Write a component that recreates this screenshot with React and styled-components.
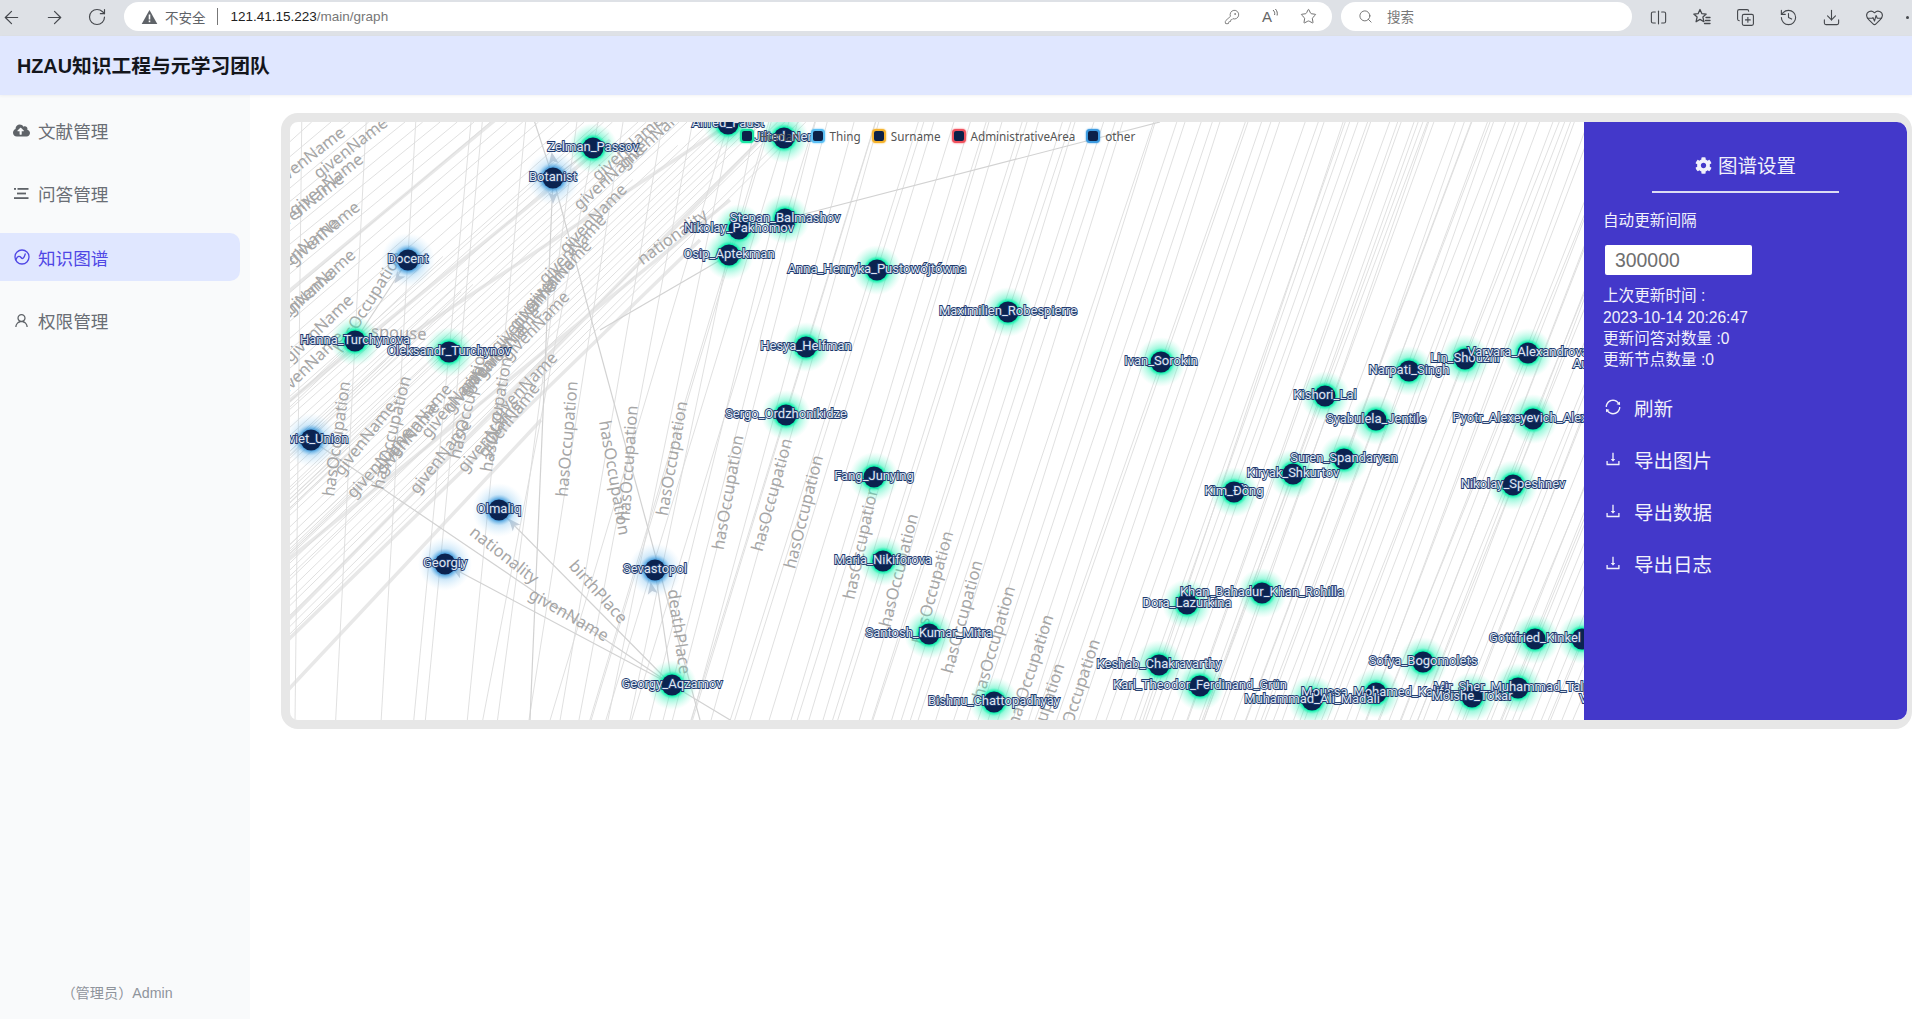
import React from "react";
import styled, { createGlobalStyle } from "styled-components";
import { FaCloudUploadAlt, FaCog } from "react-icons/fa";
import { AiOutlineSync, AiOutlineDownload, AiOutlineUser } from "react-icons/ai";
import {
  ArrowLeft,
  ArrowRight,
  RotateCw,
  KeyRound,
  Star,
  Search,
  SquareSplitHorizontal,
  CopyPlus,
  History,
  Download,
  HeartPulse,
} from "lucide-react";

const SANS = `"Liberation Sans", "Noto Sans CJK SC", sans-serif`;

const GlobalStyle = createGlobalStyle`
  html, body {
    margin: 0;
    padding: 0;
    width: 1912px;
    height: 1019px;
    overflow: hidden;
    background: #fff;
    font-family: ${SANS};
  }
  * { box-sizing: border-box; }
`;

const Page = styled.div`
  width: 1912px;
  height: 1019px;
  display: flex;
  flex-direction: column;
  overflow: hidden;
`;

const BrowserBar = styled.div`
  height: 36px;
  flex: none;
  background: #dee1e6;
  display: flex;
  align-items: flex-start;
  padding-top: 2px;
  color: #45484d;
`;

const NavIcons = styled.div`
  width: 124px;
  flex: none;
  height: 30px;
  display: flex;
  align-items: center;
  gap: 22px;
  padding-left: 1px;
`;

const Pill = styled.div`
  height: 29px;
  border-radius: 15px;
  background: #fff;
  display: flex;
  align-items: center;
  font-size: 13.5px;
  flex: none;
  width: ${(p) => p.$w}px;
  margin-right: ${(p) => p.$mr || 0}px;
  padding-left: ${(p) => p.$pl}px;
`;

const Warn = styled.span`
  color: #5f6368;
  margin-left: 7px;
`;

const UrlDivider = styled.span`
  width: 1px;
  height: 17px;
  background: #777;
  margin: 0 13px 0 11px;
`;

const UrlHost = styled.span`
  color: #222;
`;

const UrlPath = styled.span`
  color: #777;
`;

const UrlTools = styled.div`
  margin-left: auto;
  margin-right: 15px;
  display: flex;
  align-items: center;
  gap: 22px;
  color: #666;
`;

const ReadAloud = styled.span`
  display: flex;
  align-items: flex-start;
  font-size: 15px;
  line-height: 16px;
  color: #666;
`;

const SearchHint = styled.span`
  color: #777;
  margin-left: 14px;
  padding-bottom: 2px;
`;

const ToolIcons = styled.div`
  display: flex;
  align-items: center;
  gap: 24px;
  height: 30px;
  padding-left: 17px;
`;

const MoreDot = styled.span`
  width: 3px;
  height: 3px;
  border-radius: 50%;
  background: #45484d;
  margin-left: -2px;
`;

const Header = styled.header`
  height: 59px;
  flex: none;
  background: #e0e7ff;
  display: flex;
  align-items: center;
  padding: 0 0 2px 17px;
  font-size: 19.8px;
  font-weight: 700;
  color: #14161c;
  box-shadow: 0 1px 3px rgba(0, 0, 0, 0.05);
  position: relative;
`;

const Body = styled.div`
  flex: 1;
  display: flex;
  min-height: 0;
`;

const Sidebar = styled.aside`
  width: 250px;
  flex: none;
  background: #f9fafb;
  display: flex;
  flex-direction: column;
  padding: 11px 10px 17px 0;
`;

const NavItem = styled.div`
  height: 48px;
  margin-bottom: 15.5px;
  display: flex;
  align-items: center;
  padding-left: 13px;
  gap: 8px;
  font-size: 17.6px;
  border-radius: 0 10px 10px 0;
  color: ${(p) => (p.$active ? "#4f46e5" : "#6a6e75")};
  background: ${(p) => (p.$active ? "#e0e7ff" : "transparent")};
`;

const NavGlyph = styled.span`
  width: 17px;
  height: 17px;
  display: flex;
  align-items: center;
  justify-content: center;
  color: ${(p) => (p.$active ? "#4f46e5" : "#5f6368")};
`;

const UserName = styled.div`
  margin-top: auto;
  text-align: center;
  font-size: 14.2px;
  color: #8f949c;
  padding-right: 6px;
`;

const Main = styled.main`
  flex: 1;
  padding: 18px 0 0 31px;
  min-width: 0;
`;

const GraphFrame = styled.section`
  height: 616px;
  border-style: solid;
  border-color: #e7e7e7;
  border-width: 9px 5px 9px 9px;
  border-radius: 17px;
  display: flex;
  background: #fff;
`;

const GraphCanvas = styled.div`
  flex: 1;
  position: relative;
  overflow: hidden;
  border-radius: 8px 0 0 8px;
  svg {
    display: block;
  }
`;

const Legend = styled.div`
  position: absolute;
  left: 450px;
  top: 5px;
  display: flex;
  gap: 11px;
  font-family: "Noto Sans", sans-serif;
  font-size: 11.7px;
  color: #555;
`;

const LegendItem = styled.div`
  display: flex;
  align-items: center;
  gap: 5px;
  height: 17px;
`;

const LegendMark = styled.span`
  width: 14px;
  height: 14px;
  border-radius: 4px;
  background: #0c2149;
  border: 2px solid ${(p) => p.$color};
  box-shadow: 0 0 2px ${(p) => p.$color};
`;

const Panel = styled.aside`
  width: 323px;
  flex: none;
  background: #4338ca;
  color: #f1f1fb;
  border-radius: 0 10px 10px 0;
  padding: 30px 19px 0;
  font-size: 15.6px;
`;

const PanelTitle = styled.div`
  width: 187px;
  height: 41px;
  margin: 0 auto 16px;
  border-bottom: 2px solid #dcdcf3;
  display: flex;
  align-items: flex-start;
  justify-content: center;
  gap: 6px;
  font-size: 19.5px;
  line-height: 28px;
  svg {
    margin-top: 5px;
  }
`;

const FieldLabel = styled.div`
  line-height: 24px;
  margin-bottom: 12px;
`;

const IntervalInput = styled.input`
  display: block;
  width: 147px;
  height: 30px;
  margin-left: 2px;
  border: none;
  border-radius: 2px;
  background: #fff;
  padding: 0 0 0 10px;
  font-family: ${SANS};
  font-size: 19.4px;
  color: #6f6f6f;
  outline: none;
`;

const InfoLines = styled.div`
  margin-top: 10px;
  line-height: 21px;
`;

const InfoHead = styled.div`
  margin-bottom: 1px;
`;

const ActionList = styled.div`
  margin-top: 11px;
  display: flex;
  flex-direction: column;
`;

const Action = styled.div`
  height: 52px;
  display: flex;
  align-items: center;
  gap: 12px;
  padding-left: 1px;
  font-size: 19.5px;
  svg {
    width: 18px;
    height: 18px;
    flex: none;
  }
`;

const S = 1912 / 1568;

// person nodes + the concept nodes, in page coordinates
const nodes = [
  ["Alfred_Faust", 728, 124, "g"],
  ["Jilted_Nen", 784, 138, "g"],
  ["Zelman_Passov", 593, 148, "g"],
  ["Botanist", 553, 178, "b"],
  ["Stepan_Balmashov", 785, 219, "g"],
  ["Nikolay_Pakhomov", 739, 229, "g"],
  ["Osip_Aptekman", 729, 255, "g"],
  ["Docent", 408, 260, "b"],
  ["Anna_Henryka_Pustowójtówna", 877, 270, "g"],
  ["Maximilien_Robespierre", 1008, 312, "g"],
  ["Hanna_Turchynova", 355, 341, "g"],
  ["Oleksandr_Turchynov", 449, 352, "g"],
  ["Hesya_Helfman", 806, 347, "g"],
  ["Ivan_Sorokin", 1161, 362, "g"],
  ["Sergo_Ordzhonikidze", 786, 415, "g"],
  ["Soviet_Union", 311, 440, "b"],
  ["Fang_Junying", 874, 477, "g"],
  ["Olmaliq", 499, 510, "b"],
  ["Maria_Nikiforova", 883, 561, "g"],
  ["Georgiy", 445, 564, "b"],
  ["Sevastopol", 655, 570, "b"],
  ["Santosh_Kumar_Mitra", 929, 634, "g"],
  ["Georgy_Aqzamov", 672, 685, "g"],
  ["Kishori_Lal", 1325, 396, "g"],
  ["Narpati_Singh", 1409, 371, "g"],
  ["Lin_Shouzhi", 1465, 359, "g"],
  ["Varvara_Alexandrova", 1528, 353, "g"],
  ["Augustin_Robespierre", 1636, 365, "g"],
  ["Syabulela_Jentile", 1376, 420, "g"],
  ["Pyotr_Alexeyevich_Alexeyev", 1533, 419, "g"],
  ["Suren_Spandaryan", 1344, 459, "g"],
  ["Kiryak_Shkurtov", 1293, 474, "g"],
  ["Kim_Đồng", 1234, 492, "g"],
  ["Nikolay_Speshnev", 1513, 485, "g"],
  ["Khan_Bahadur_Khan_Rohilla", 1262, 593, "g"],
  ["Dora_Lazurkina", 1187, 604, "g"],
  ["Gottfried_Kinkel", 1535, 639, "g"],
  ["", 1582, 639, "g"],
  ["Keshab_Chakravarthy", 1159, 665, "g"],
  ["Sofya_Bogomolets", 1423, 662, "g"],
  ["Karl_Theodor_Ferdinand_Grün", 1200, 686, "g"],
  ["Mir_Sher_Muhammad_Talpur", 1518, 688, "g"],
  ["Moussa_Mohamed_Kalifa", 1376, 693, "g"],
  ["Moishe_Tokar", 1472, 697, "g"],
  ["Muhammad_Ali_Madali", 1312, 700, "g"],
  ["Bishnu_Chattopadhyay", 994, 702, "g"],
  ["Valentin_Volkov", 1625, 700, "g"],
];

// edge captions, in the coordinates of the scaled-down screenshot
const captions = [
  ["givenName", 288, 122, -38], ["givenName", 253, 130, -38], ["givenName", 268, 152, -38],
  ["givenName", 252, 168, -38], ["givenName", 266, 192, -40], ["givenName", 248, 205, -40],
  ["givenName", 263, 232, -42], ["givenName", 246, 248, -42], ["givenName", 262, 270, -44],
  ["givenName", 254, 300, -44], ["hasOccupation", 303, 248, -58], ["spouse", 327, 274, 3],
  ["givenName", 515, 122, -42], ["givenName", 500, 146, -42], ["givenName", 537, 112, -42],
  ["givenName", 487, 180, -46], ["givenName", 470, 205, -46], ["givenName", 458, 226, -46],
  ["givenName", 445, 242, -48], ["givenName", 430, 260, -48], ["givenName", 440, 268, -46],
  ["givenName", 418, 282, -48], ["givenName", 405, 295, -46], ["givenName", 392, 310, -48],
  ["givenName", 430, 318, -46], ["givenName", 372, 330, -50], ["givenName", 345, 345, -50],
  ["givenName", 300, 360, -52], ["givenName", 335, 360, -50], ["givenName", 312, 380, -48],
  ["givenName", 362, 375, -52], ["givenName", 402, 358, -50], ["givenName", 418, 345, -52],
  ["nationality", 552, 195, -36],
  ["hasOccupation", 277, 360, -82], ["hasOccupation", 322, 355, -76], ["hasOccupation", 385, 330, -76],
  ["hasOccupation", 408, 340, -80], ["hasOccupation", 466, 360, -85], ["hasOccupation", 503, 392, 80],
  ["hasOccupation", 516, 380, -86], ["hasOccupation", 552, 376, -80], ["hasOccupation", 598, 404, -80],
  ["hasOccupation", 634, 406, -75], ["hasOccupation", 660, 420, -76], ["hasOccupation", 707, 445, -78],
  ["hasOccupation", 738, 468, -76], ["hasOccupation", 766, 482, -75], ["hasOccupation", 790, 506, -75],
  ["hasOccupation", 816, 527, -74], ["hasOccupation", 846, 550, -72], ["hasOccupation", 884, 570, -72],
  ["hasOccupation", 855, 590, -72], ["nationality", 413, 456, 38], ["birthPlace", 490, 486, 48],
  ["givenName", 466, 505, 30], ["deathPlace", 556, 518, 82],
];

const stops = [
  [290, 0.02],
  [500, 0.12],
  [730, 0.3],
  [1000, 0.33],
  [1300, 0.37],
  [1600, 0.42],
];

const leanAt = (x) => {
  for (let i = 1; i < stops.length; i++) {
    if (x <= stops[i][0]) {
      const [x0, a] = stops[i - 1];
      const [x1, b] = stops[i];
      return a + ((b - a) * (x - x0)) / (x1 - x0);
    }
  }
  return 0.42;
};

let seed = 77;
const rnd = () => {
  seed = (seed * 16807) % 2147483647;
  return seed / 2147483647;
};

const buildEdges = () => {
  const out = [];
  // steep bundle crossing the whole graph, thin on the left and dense on the right
  for (let i = 0; i < 80; i++) {
    const t = i / 80;
    const x = 295 + 1280 * Math.pow(t, 0.62) + rnd() * 8;
    const lean = leanAt(x) + (rnd() - 0.5) * 0.03;
    out.push([x, 722, x + lean * 600, 122]);
  }
  // a line through every person node
  nodes.forEach(([, x, y, kind]) => {
    if (kind !== "g") return;
    const lean = leanAt(x);
    out.push([x - lean * (722 - y), 722, x + lean * (y - 122), 122]);
  });
  // diagonal bundle on the left
  for (let y0 = 140; y0 < 400; y0 += 15) {
    const k = 0.76 + (0.25 * (y0 - 140)) / 540;
    const end = Math.min(250 + rnd() * 420, (y0 - 122) / k);
    out.push([288, y0 + rnd() * 5, 288 + end, y0 - end * k]);
  }
  for (let y0 = 400; y0 < 640; y0 += 9) {
    const k = 0.76 + (0.25 * (y0 - 140)) / 540;
    const end = Math.min(300 + rnd() * 400, (y0 - 122) / k);
    out.push([288, y0 + rnd() * 4, 288 + end, y0 - end * k]);
  }
  for (let i = 0; i < 20; i++) {
    const y0 = 400 + rnd() * 190;
    const len = 60 + rnd() * 130;
    out.push([288, y0, 288 + len, y0 - len * 0.95]);
  }
  return out;
};

const thinEdges = buildEdges();

const heavyEdges = [
  [288, 292, 500, 116],
  [288, 402, 610, 140],
  [288, 560, 730, 200],
  [288, 640, 700, 240],
  [288, 690, 541, 420],
  [395, 345, 720, 130],
  [288, 620, 770, 130],
];

const namedEdges = [
  [672, 685, 311, 440],
  [672, 685, 445, 564],
  [672, 685, 499, 510],
  [672, 685, 655, 570],
  [672, 685, 780, 750],
  [355, 341, 408, 260],
  [553, 178, 593, 148],
  [553, 178, 700, 720],
  [553, 178, 530, 720],
  [785, 219, 1160, 122],
  [729, 255, 600, 330],
  [553, 178, 534, 120],
];

const arrows = [
  [553, 196, 180],
  [553, 160, -10],
  [399, 277, 215],
  [652, 590, 350],
  [514, 525, 320],
  [459, 572, 300],
];

const GLOW = { g: "url(#glowGreen)", b: "url(#glowBlue)" };

const GraphDrawing = () => (
  <svg width="1294" height="598" viewBox="290 122 1294 598" xmlns="http://www.w3.org/2000/svg">
    <defs>
      <radialGradient id="glowGreen">
        <stop offset="0.42" stopColor="#00f2a8" stopOpacity="1" />
        <stop offset="0.56" stopColor="#1ef0b0" stopOpacity="0.45" />
        <stop offset="1" stopColor="#7ff5d2" stopOpacity="0" />
      </radialGradient>
      <radialGradient id="glowBlue">
        <stop offset="0.4" stopColor="#2a8fd8" stopOpacity="0.8" />
        <stop offset="0.58" stopColor="#6ab8ec" stopOpacity="0.32" />
        <stop offset="1" stopColor="#a9daf8" stopOpacity="0" />
      </radialGradient>
    </defs>
    {heavyEdges.map(([x1, y1, x2, y2], i) => (
      <line key={i} x1={x1} y1={y1} x2={x2} y2={y2} stroke="#e8e8e8" strokeWidth="3.5" />
    ))}
    {thinEdges.map(([x1, y1, x2, y2], i) => (
      <line key={i} x1={x1} y1={y1} x2={x2} y2={y2} stroke="#dcdcdc" strokeWidth="0.9" />
    ))}
    {namedEdges.map(([x1, y1, x2, y2], i) => (
      <line key={i} x1={x1} y1={y1} x2={x2} y2={y2} stroke="#d2d2d2" strokeWidth="1.2" />
    ))}
    {arrows.map(([x, y, r], i) => (
      <path key={i} d="M0 -8 L5 4 L0 1 L-5 4 Z" fill="#c9ced6" transform={`translate(${x} ${y}) rotate(${r})`} />
    ))}
    {captions.map(([text, x, y, r], i) => (
      <text
        key={i}
        transform={`translate(${x * S} ${y * S}) rotate(${r})`}
        textAnchor="middle"
        dominantBaseline="middle"
        fontFamily='"Noto Sans", sans-serif'
        fontSize="16.5"
        fill="#a6a6a6"
      >
        {text}
      </text>
    ))}
    {nodes.map(([name, x, y, kind]) => (
      <circle key={`${name}${x}`} cx={x} cy={y} r={kind === "g" ? 25 : 27} fill={GLOW[kind]} />
    ))}
    {nodes.map(([name, x, y]) => (
      <circle key={`${name}${x}`} cx={x} cy={y} r="10.5" fill="#0b2350" />
    ))}
    {nodes.map(([name, x, y]) => (
      <text
        key={`${name}${x}`}
        x={x}
        y={y}
        textAnchor="middle"
        dominantBaseline="middle"
        fontFamily="Roboto, sans-serif"
        fontSize="13"
        fill="#dfe6f2"
        stroke="#1f3a6e"
        strokeWidth="1.8"
        paintOrder="stroke"
      >
        {name}
      </text>
    ))}
  </svg>
);

const KnowledgeIcon = () => (
  <svg width="16" height="16" viewBox="0 0 16 16" fill="none" stroke="currentColor" strokeWidth="1.3">
    <circle cx="8" cy="8" r="7" />
    <path d="M2 10.5c1.6-3.8 3.6-3.8 5-2s3 1.4 4.2-3.5" strokeLinecap="round" />
  </svg>
);

const ListIcon = () => (
  <svg width="15" height="13" viewBox="0 0 15 13" fill="currentColor">
    <rect x="0" y="1" width="2" height="1.8" />
    <rect x="3.5" y="1" width="11" height="1.8" />
    <rect x="3" y="5.6" width="9" height="1.8" />
    <rect x="0" y="10.2" width="14.5" height="1.8" />
  </svg>
);

const FavouritesIcon = () => (
  <svg width="20" height="20" viewBox="0 0 20 20" fill="none" stroke="currentColor" strokeWidth="1.3" strokeLinejoin="round">
    <path d="M8 2.5l1.9 4.2 4.3.4-3.3 3 1 4.6L8 12.4l-3.9 2.3 1-4.6-3.3-3 4.3-.4z" />
    <path d="M14 10.5h4M13.5 13.5h4.5M12.5 16.5h5.5" strokeLinecap="round" />
  </svg>
);

const WarnIcon = () => (
  <svg width="17" height="16" viewBox="0 0 17 16">
    <path d="M8.5 1L16.3 15H.7z" fill="#5f6368" />
    <rect x="7.7" y="5.5" width="1.6" height="5" fill="#fff" />
    <rect x="7.7" y="11.5" width="1.6" height="1.7" fill="#fff" />
  </svg>
);

const SoundWaves = () => (
  <svg width="6" height="10" viewBox="0 0 6 10" fill="none" stroke="currentColor" strokeWidth="1">
    <path d="M1 1c1.6 1.5 2 3 1.6 5M3.4 0c1.8 2 2.2 4 1.7 6.5" />
  </svg>
);

const menu = [
  ["文献管理", <FaCloudUploadAlt size={17} />],
  ["问答管理", <ListIcon />],
  ["知识图谱", <KnowledgeIcon />, true],
  ["权限管理", <AiOutlineUser size={17} />],
];

const legend = [
  ["Human", "#18e6a2"],
  ["Thing", "#5cc0f5"],
  ["Surname", "#f5b32e"],
  ["AdministrativeArea", "#f0525e"],
  ["other", "#3d9be0"],
];

const actions = [
  ["刷新", <AiOutlineSync />],
  ["导出图片", <AiOutlineDownload />],
  ["导出数据", <AiOutlineDownload />],
  ["导出日志", <AiOutlineDownload />],
];

const App = () => (
  <Page>
    <GlobalStyle />
    <BrowserBar>
      <NavIcons>
        <ArrowLeft size={21} strokeWidth={1.4} />
        <ArrowRight size={21} strokeWidth={1.4} />
        <RotateCw size={20} strokeWidth={1.4} />
      </NavIcons>
      <Pill $w={1208} $mr={9} $pl={17}>
        <WarnIcon />
        <Warn>不安全</Warn>
        <UrlDivider />
        <UrlHost>121.41.15.223</UrlHost>
        <UrlPath>/main/graph</UrlPath>
        <UrlTools>
          <KeyRound size={16} strokeWidth={1.2} />
          <ReadAloud>
            A
            <SoundWaves />
          </ReadAloud>
          <Star size={17} strokeWidth={1.3} />
        </UrlTools>
      </Pill>
      <Pill $w={291} $pl={17}>
        <Search size={15} strokeWidth={1.4} color="#666" />
        <SearchHint>搜索</SearchHint>
      </Pill>
      <ToolIcons>
        <SquareSplitHorizontal size={19} strokeWidth={1.4} />
        <FavouritesIcon />
        <CopyPlus size={19} strokeWidth={1.4} />
        <History size={19} strokeWidth={1.4} />
        <Download size={19} strokeWidth={1.4} />
        <HeartPulse size={19} strokeWidth={1.4} />
        <MoreDot />
      </ToolIcons>
    </BrowserBar>
    <Header>HZAU知识工程与元学习团队</Header>
    <Body>
      <Sidebar>
        {menu.map(([label, icon, active]) => (
          <NavItem key={label} $active={active}>
            <NavGlyph $active={active}>{icon}</NavGlyph>
            {label}
          </NavItem>
        ))}
        <UserName>（管理员）Admin</UserName>
      </Sidebar>
      <Main>
        <GraphFrame>
          <GraphCanvas>
            <GraphDrawing />
            <Legend>
              {legend.map(([label, color]) => (
                <LegendItem key={label}>
                  <LegendMark $color={color} />
                  {label}
                </LegendItem>
              ))}
            </Legend>
          </GraphCanvas>
          <Panel>
            <PanelTitle>
              <FaCog size={17} />
              图谱设置
            </PanelTitle>
            <FieldLabel>自动更新间隔</FieldLabel>
            <IntervalInput defaultValue="300000" />
            <InfoLines>
              <InfoHead>上次更新时间 :</InfoHead>
              <div>2023-10-14 20:26:47</div>
              <div>更新问答对数量 :0</div>
              <div>更新节点数量 :0</div>
            </InfoLines>
            <ActionList>
              {actions.map(([label, icon]) => (
                <Action key={label}>
                  {icon}
                  {label}
                </Action>
              ))}
            </ActionList>
          </Panel>
        </GraphFrame>
      </Main>
    </Body>
  </Page>
);

export default App;
